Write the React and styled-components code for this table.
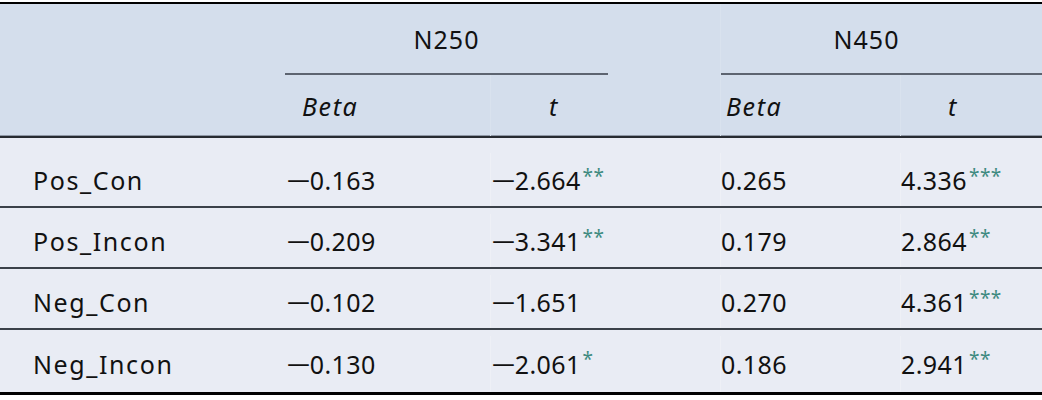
import React from 'react';
import styled, { createGlobalStyle } from 'styled-components';

const COLS = '285px 205px 230px 180px 142px';

const GlobalStyle = createGlobalStyle`
  html, body {
    margin: 0;
    padding: 0;
    background: #ffffff;
  }
  body {
    font-family: "Noto Sans", "Liberation Sans", sans-serif;
    color: #111;
  }
`;

const Page = styled.div`
  width: 1042px;
  padding-top: 2px;
`;

const Table = styled.div`
  border-top: 2px solid #000;
  border-bottom: 3px solid #000;
  font-size: 25px;
  letter-spacing: 0.4px;
`;

const Head = styled.div`
  display: grid;
  grid-template-columns: ${COLS};
  grid-template-rows: 71px 61px;
  background: #d4deec;
  border-bottom: 2px solid #272b31;
  box-shadow: inset 0 -1px 0 #8f98a6;
`;

const Blank = styled.div`
  grid-row: span 2;
`;

const GroupCell = styled.div`
  grid-column: span 2;
  display: flex;
  border-left: ${({ $line }) => ($line ? '1px solid #d9e2ee' : 'none')};
`;

const GroupLabel = styled.div`
  box-sizing: border-box;
  width: ${({ $w }) => $w}px;
  height: 100%;
  display: flex;
  align-items: center;
  justify-content: center;
  padding-right: ${({ $right }) => $right || 0}px;
  letter-spacing: 1px;
  border-bottom: 2px solid #5d6470;
`;

const SubCell = styled.div`
  display: flex;
  align-items: center;
  padding-left: ${({ $pad }) => $pad}px;
  font-style: italic;
  letter-spacing: 1.6px;
  border-left: ${({ $line }) => ($line ? '1px solid #d9e2ee' : 'none')};
`;

const Body = styled.div`
  background: #e9ecf4;
`;

const Row = styled.div`
  display: grid;
  grid-template-columns: ${COLS};
  box-sizing: border-box;
  height: ${({ $h }) => $h}px;
  padding-top: ${({ $top }) => $top || 0}px;
  border-bottom: ${({ $last }) => ($last ? 'none' : '2px solid #3b4149')};
`;

const Cell = styled.div`
  display: flex;
  align-items: center;
  padding-left: ${({ $pad }) => $pad}px;
  white-space: nowrap;
  border-left: ${({ $line }) => ($line ? '1px solid #eef0f6' : 'none')};
`;

const Label = styled(Cell)`
  letter-spacing: 1.6px;
`;

const Minus = styled.span`
  display: inline-block;
  transform: scaleX(1.75);
  transform-origin: left center;
  margin-right: 9px;
`;

const Stars = styled.span`
  color: #3e8a80;
  font-size: 19px;
  letter-spacing: 0.5px;
  align-self: flex-start;
  margin-top: ${({ $top }) => $top}px;
  margin-left: 2px;
`;

const Num = ({ value }) =>
  value.startsWith('-') ? (
    <span>
      <Minus>{'\u2212'}</Minus>
      {value.slice(1)}
    </span>
  ) : (
    <span>{value}</span>
  );

const rows = [
  { name: 'Pos_Con', b1: '-0.163', t1: '-2.664', s1: '**', b2: '0.265', t2: '4.336', s2: '***' },
  { name: 'Pos_Incon', b1: '-0.209', t1: '-3.341', s1: '**', b2: '0.179', t2: '2.864', s2: '**' },
  { name: 'Neg_Con', b1: '-0.102', t1: '-1.651', s1: '', b2: '0.270', t2: '4.361', s2: '***' },
  { name: 'Neg_Incon', b1: '-0.130', t1: '-2.061', s1: '*', b2: '0.186', t2: '2.941', s2: '**' },
];

const heights = [70, 61, 61, 62];

const App = () => {
  return (
    <Page>
      <GlobalStyle />
      <Table>
        <Head>
          <Blank />
          <GroupCell>
            <GroupLabel $w={323}>N250</GroupLabel>
          </GroupCell>
          <GroupCell $line>
            <GroupLabel $w={322} $right={30}>N450</GroupLabel>
          </GroupCell>
          <SubCell $pad={17}>Beta</SubCell>
          <SubCell $pad={58} $line>t</SubCell>
          <SubCell $pad={5} $line>Beta</SubCell>
          <SubCell $pad={47} $line>t</SubCell>
        </Head>
        <Body>
          {rows.map((r, i) => {
            const pad = i === 0 ? 15 : 6;
            const top = pad + 10;
            return (
              <Row key={r.name} $h={heights[i]} $top={pad} $last={i === rows.length - 1}>
                <Label $pad={33}>{r.name}</Label>
                <Cell $pad={1}><Num value={r.b1} /></Cell>
                <Cell $pad={0} $line>
                  <Num value={r.t1} />
                  {r.s1 && <Stars $top={top - pad}>{r.s1}</Stars>}
                </Cell>
                <Cell $pad={0} $line><Num value={r.b2} /></Cell>
                <Cell $pad={0} $line>
                  <Num value={r.t2} />
                  {r.s2 && <Stars $top={top - pad}>{r.s2}</Stars>}
                </Cell>
              </Row>
            );
          })}
        </Body>
      </Table>
    </Page>
  );
};

export default App;
